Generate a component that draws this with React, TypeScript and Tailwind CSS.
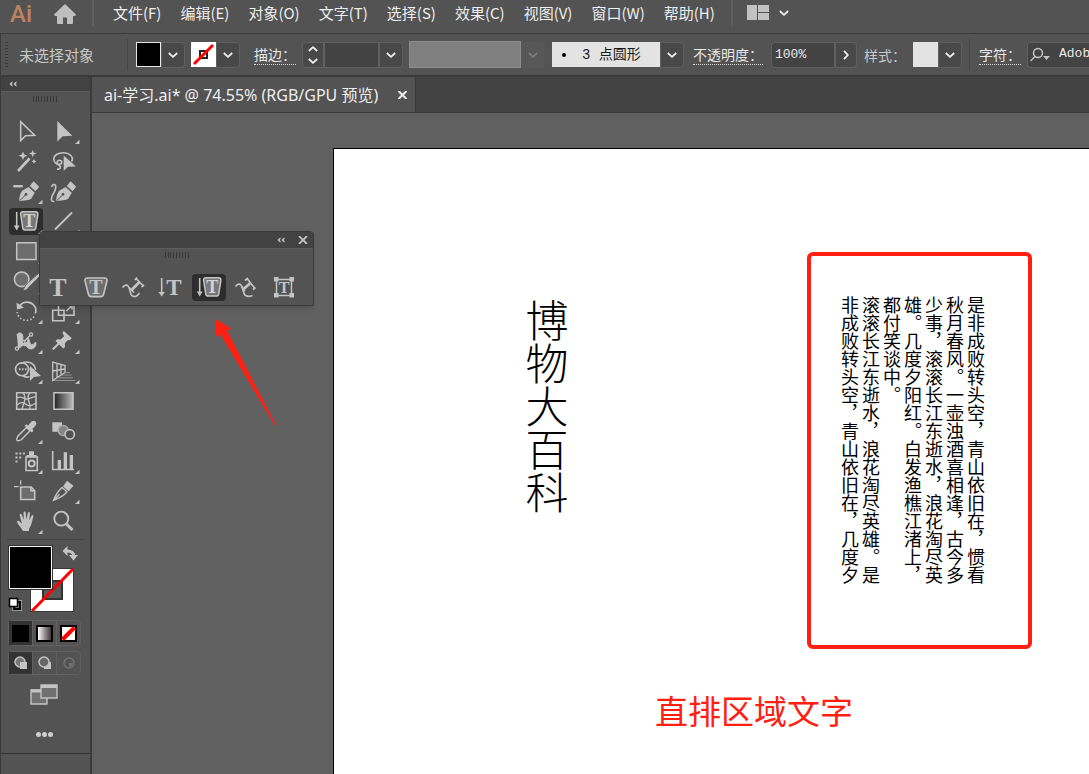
import type { ReactNode } from 'react';

const L = '#c4c4c4';

const menus = ['文件(F)', '编辑(E)', '对象(O)', '文字(T)', '选择(S)', '效果(C)', '视图(V)', '窗口(W)', '帮助(H)'];

const columns = [
  '是非成败转头空，青山依旧在，惯看',
  '秋月春风。一壶浊酒喜相逢，古今多',
  '少事，滚滚长江东逝水，浪花淘尽英',
  '雄。几度夕阳红。白发渔樵江渚上，',
  '都付笑谈中。',
  '滚滚长江东逝水，浪花淘尽英雄。是',
  '非成败转头空，青山依旧在，几度夕',
];

function Chevron({ up = false, dim = false }: { up?: boolean; dim?: boolean }) {
  return (
    <svg width="10" height="6" viewBox="0 0 10 6" fill="none" stroke={dim ? '#7b7b7b' : '#f0f0f0'} strokeWidth="1.8">
      <path d={up ? 'M.8 5 5 1.2 9.2 5' : 'M.8 1 5 4.8 9.2 1'} />
    </svg>
  );
}

function DropButton({ label, dim = false }: { label: string; dim?: boolean }) {
  return (
    <button
      aria-label={label}
      className={
        dim
          ? 'flex h-[26px] w-6 shrink-0 items-center justify-center rounded-r bg-[#575757]'
          : 'flex h-[26px] w-6 shrink-0 items-center justify-center rounded-r border border-[#606060] bg-[#484848]'
      }
    >
      <Chevron dim={dim} />
    </button>
  );
}

function DoubleLeft() {
  return (
    <svg width="8" height="6" viewBox="0 0 8 6" fill="#d0d0d0">
      <path d="M3.500.3v1.700L2.500 3l1 1v1.700L.5 3zM7.500.3v1.700L6.500 3l1 1v1.700L4.500 3z" />
    </svg>
  );
}

function Grip() {
  return (
    <svg width="24" height="6" viewBox="0 0 24 6" stroke="#383838" strokeWidth="1">
      <path d="M.5 0v6M3.5 0v6M5.5 0v6M8.5 0v6M11.5 0v6M14.5 0v6M17.5 0v6M20.5 0v6M23.5 0v6" />
    </svg>
  );
}

function Letter({ x, y, size, fill = L }: { x: number; y: number; size: number; fill?: string }) {
  return (
    <text x={x} y={y} fontSize={size} fontWeight="700" fontFamily="Liberation Serif, serif" textAnchor="middle" fill={fill} stroke="none">
      T
    </text>
  );
}

const nib = (
  <>
    <path fill={L} stroke="none" d="M10 23.2C10.5 19 11 15 13.2 12.8L19.6 9l6.2 5.8-3.4 5.8C20 22.6 15 22.4 10 23.2z" />
    <path fill={L} stroke="none" d="m20.8 8 3.8-4.7 5.6 5.4-3.7 4.5z" />
    <path d="m10.5 22.8 6-5.8" stroke="#535353" strokeWidth="1" />
    <circle cx="17" cy="16.4" r="1.4" fill="#535353" stroke="none" />
  </>
);

const areaVertical = (
  <>
    <path d="M7.7 4v15" strokeWidth="1.6" />
    <path d="M4.8 17.500h5.800L7.700 22.500z" fill={L} stroke="none" />
    <path d="M14 3.800h12.500c2 0 2.600 1 2.300 2.800l-2 13.200c-.3 1.700-1 2.200-2.400 2.200h-8.300c-1.400 0-2.100-.5-2.400-2.200l-2-13.200C11.400 4.800 12 3.800 14 3.800z" fill="#777" strokeWidth="1.500" />
    <Letter x={20.3} y={19} size={18} fill="#d4d4d4" />
  </>
);

type Tool = { name: string; mark?: boolean; art: ReactNode };

const tools: Tool[] = [
  { name: '选择工具', art: <path d="M11.7 3.7v18.8l4.9-4.8 9-.5z" /> },
  { name: '直接选择工具', mark: true, art: <path d="M11.3 3v20.4l5.4-5.2 9.6-.5z" fill={L} stroke="none" /> },
  {
    name: '魔棒工具',
    art: (
      <>
        <path d="M9 23 20.5 10.5" strokeWidth="2.6" />
        <path fill={L} stroke="none" d="m14 3.600 1.300 2.900 3.100 1.300-3.100 1.300-1.300 2.900-1.300-2.900-3.100-1.300 3.100-1.300zM23.700 1.800l1 2.800 2.800 1-2.800 1-1 2.800-1-2.800-2.800-1 2.800-1zM25 11l.8 1.600 1.600.8-1.600.8-.8 1.600-.8-1.600-1.600-.8 1.600-.8z" />
      </>
    ),
  },
  {
    name: '套索工具',
    art: (
      <>
        <path d="M25.5 13.5c2.8-4.5-2-8.700-8.200-8.700-5.500 0-9.500 2.600-9.500 6 0 3 2.200 5.300 5 5.500 1.800 0 3-.8 3-2s-1.100-2-2.400-2c-1.400 0-2.500 1-2.300 2.600.2 2.400 3.300 2.300 3.400 4.200 0 1.900-2.200 2.400-3.500 1.800" />
        <path d="M17.7 7.5V23l4.2-4.200 8-.4z" fill={L} stroke="none" />
      </>
    ),
  },
  { name: '删除锚点工具', mark: true, art: (<><path d="M4.3 8.2h9.4" strokeWidth="2.4" />{nib}</>) },
  { name: '曲率工具', art: (<>{nib}<path d="M8.3 23.5C3 24 6.300 17 8 14.500 10 11 10.500 7 8.400 6.500 7 6.200 6 7.500 5.800 9" /></>) },
  { name: '直排区域文字工具', mark: true, art: areaVertical },
  { name: '直线段工具', mark: true, art: <path d="M9 21.500 26 4.500" strokeWidth="1.8" /> },
  { name: '矩形工具', mark: true, art: <path d="M7.700 4.800H27v16.800H7.700z" fill="#6d6d6d" strokeWidth="1.500" /> },
  { name: '光晕工具', art: null },
  {
    name: '斑点画笔工具',
    mark: true,
    art: (
      <>
        <circle cx="12.700" cy="11.300" r="7.300" fill="#6d6d6d" />
        <path d="M31 4 17.500 16l-3.700 6.200c2.700.5 5-.8 6.200-3.200L32 7z" fill={L} stroke="#535353" strokeWidth=".8" />
      </>
    ),
  },
  { name: '橡皮擦工具', art: null },
  {
    name: '旋转工具',
    mark: true,
    art: (
      <>
        <path d="M10.500 8.300C14 3 21 3 24.500 7c2.400 2.500 2.800 6 1.800 8.500" strokeWidth="1.700" />
        <path d="m7.500 4.500.5 7 7-1.800z" fill={L} stroke="none" />
        <path d="M25 18.500c-3.500 5.500-12 5-15.500-.5-1-1.500-1.300-3-1.200-5" strokeDasharray="1.500 2" />
      </>
    ),
  },
  { name: '比例缩放工具', mark: true, art: (<><path d="M6.700 12.200H18v10.500H6.700zM12.500 3H28v14.300H12.500zM20.500 13l5-5M22 7.500h4v4" /></>) },
  {
    name: '宽度工具',
    mark: true,
    art: (
      <>
        <path d="M8 7.500c0-2.500 3.500-3.500 5-1.500 2 2.800-.5 6 2.500 8.500 2.500 1.500 4-1.500 3-5 2.500 2 1.500 6.500 4 7 2 .5 3-1 4-2.500 1.500 3-1 7-4.500 7-4 0-4-4-7-4-2.500 0-3 3-6 3" fill={L} strokeWidth="1" />
        <path d="M8.500 20 21.500 7M10 10.500 16 18" strokeWidth="1.300" />
        <circle cx="22" cy="6.500" r="1.600" fill="#535353" strokeWidth="1.300" />
        <circle cx="8" cy="20.500" r="1.600" fill="#535353" strokeWidth="1.300" />
        <circle cx="14.500" cy="14" r="1.400" fill="#535353" strokeWidth="1.300" />
      </>
    ),
  },
  { name: '操控变形工具', mark: true, art: (<><path d="m6.700 21.500 7-7" strokeWidth="2" /><path d="m17.800 3 8 7.300-2 1.900-2-.3-3 3.600.3 3.500-1.800 1.500L9.500 13l1.700-1.800 3.400.3 3.500-3.200-1.600-3.500z" fill={L} stroke="none" /></>) },
  {
    name: '形状生成器工具',
    mark: true,
    art: (
      <>
        <circle cx="13" cy="11.300" r="6.500" />
        <path d="M12 5.500C18 2 26 5 26.500 12M13.500 17.500c2 1.500 5 2 7 1" />
        <path d="M10 11.300h11" strokeDasharray="1.500 1.500" strokeWidth="2" />
        <path d="M21 8v15l4-4 7-1z" fill={L} stroke="none" />
      </>
    ),
  },
  {
    name: '透视网格工具',
    mark: true,
    art: (
      <>
        <path d="M6.700 4v18.500L19 14.500V7.500zM11 5.500v14.300M15 6.500v10.700M6.700 13 19 11" strokeWidth="1.300" />
        <path d="M20 14.500h4M16 17h9.500M12.500 19.800H27M8 22.500h21" stroke="#929292" strokeWidth="1" />
      </>
    ),
  },
  { name: '网格工具', art: (<><path d="M7.700 4.800H27v16.500H7.700z" /><path d="M14 5c4 4 1 10-1 16M21 5c-5 4 1 10 0 16M8 10c5-3 7 2 11 1s5-3 8-2M8 17c5-4 7-2 10 0s6 0 9-2" strokeWidth="1.300" /></>) },
  {
    name: '渐变工具',
    art: (
      <>
        <defs>
          <linearGradient id="fade">
            <stop offset="0" stopColor="#222" />
            <stop offset="1" stopColor="#bbb" />
          </linearGradient>
        </defs>
        <path d="M8 4.800h19v16.500H8z" fill="url(#fade)" />
      </>
    ),
  },
  {
    name: '吸管工具',
    mark: true,
    art: (
      <>
        <path d="m17.500 9.500 3.500 3.300-8.500 8.700c-1.500 1-3.700 1.500-4.500.8s.2-2.800 1-4.300z" strokeWidth="1.500" />
        <path d="m15.500 7.800 1.800-1.500 1.800 1.200 2.500-3C23.500 2.300 26 2.800 26.800 4s.6 3-.8 4.300L23.400 11l1.100 1.800-1.700 1.700z" fill={L} stroke="none" />
      </>
    ),
  },
  { name: '混合工具', art: (<><path d="M6.300 4.300H16v9.500H6.300z" fill={L} stroke="none" /><circle cx="17.300" cy="12.500" r="5" fill="#858585" stroke="#a8a8a8" /><circle cx="23.700" cy="16.300" r="4.700" fill="#535353" /></>) },
  {
    name: '符号喷枪工具',
    mark: true,
    art: (
      <>
        <path d="M17 9h11.300v13.500H17z" />
        <path d="M20 3.200h5V7h2.500v2h-10V7H20z" fill={L} stroke="none" />
        <circle cx="22.700" cy="15.500" r="3" strokeWidth="2" />
        <path d="M6.500 5.500h9.500M6.500 9.500h6M6.500 13.500H9" strokeWidth="2" strokeDasharray="2 1.700" />
      </>
    ),
  },
  { name: '柱形图工具', mark: true, art: (<><path d="M6.700 3v18.500H28" /><path d="M11.700 12H15v9h-3.300zM17.700 4.300H21V21h-3.300zM23.700 7H27v14h-3.300z" fill={L} stroke="none" /></>) },
  { name: '画板工具', art: (<><path d="M11.700 9h10.500l3.500 3.700v8.800h-14z" fill="#6d6d6d" /><path d="M22 9v3.800h4" /><path d="M11.700 2.300v4.500M5 8.700h4.700" strokeWidth="1.200" /></>) },
  { name: '切片工具', mark: true, art: (<><path d="M7.500 22.300c2-5.500 4.500-9 8.500-12.800l5 4.300c-3.500 4.200-8 6.700-13.500 8.500zM8 22l5.500-5.700" strokeWidth="1.400" /><path d="m17 8.500 4-5.800 6.500 5-4.800 5.500z" fill={L} stroke="none" /></>) },
  {
    name: '抓手工具',
    mark: true,
    art: (
      <path
        fill={L}
        stroke="none"
        d="M14 23c-1-2.500-4.700-6-6-8.700-.4-1.200 1-2 2-1.200l3 2.700-2.300-8.600c-.3-1.500 1.500-2 2-.6l2 5.400-.2-7.300c0-1.600 2-1.600 2.200 0l.7 6.800 1.500-6.500c.4-1.500 2.200-1.100 2 .4l-.7 7 2.300-4.700c.7-1.300 2.200-.6 1.800.8-1.200 4.500-1.800 9-4.300 12.500V23z"
      />
    ),
  },
  { name: '缩放工具', art: (<><circle cx="15.300" cy="10.700" r="7" strokeWidth="1.800" /><path d="m20.300 16 6.200 6" strokeWidth="3" /></>) },
];

const typeTools: Tool[] = [
  { name: '文字工具', art: <Letter x={17} y={21.5} size={26} /> },
  {
    name: '区域文字工具',
    art: (
      <>
        <path d="M8.500 4h17c2.300 0 2.900 1.200 2.400 3.200L24.600 20c-.4 1.800-1.300 2.600-3 2.600h-9.200c-1.700 0-2.600-.8-3-2.600L6.100 7.200C5.600 5.200 6.200 4 8.500 4z" fill="#6d6d6d" />
        <Letter x={17} y={19.5} size={20} />
      </>
    ),
  },
  {
    name: '路径文字工具',
    art: (
      <>
        <path d="M6.500 13.500c2-2.500 4-3 5.500-1.500 2.500 2.500 1.500 8.500 4.500 10 3.500 1.500 5-.5 7-3" strokeWidth="1.600" />
        <path d="m15.500 16 8-8" strokeWidth="2.800" />
        <path d="m13 13.500 5 5M19.500 4l8 8M19 6l2-2.500M25.500 13l2.500-2" strokeWidth="1.700" />
      </>
    ),
  },
  { name: '直排文字工具', art: (<><path d="M7.700 4v15" /><path d="M4.400 18H11l-3.300 4.500z" fill={L} stroke="none" /><Letter x={20} y={21} size={23} /></>) },
  { name: '直排区域文字', art: areaVertical },
  {
    name: '直排路径文字工具',
    art: (
      <>
        <path d="M6.500 12.500c2-2.500 4-3 5.500-1.500 2.500 2.500 1.500 8.500 4.500 10.500 3 1.800 4.500 1 7 0" strokeWidth="1.600" />
        <path d="m14.500 15 6.500-5.500" strokeWidth="2.800" />
        <path d="m12.500 13 3.500 4M18 4.500l7.500 9.500M16 6.500l3-2.500M24 15.500l2.500-2" strokeWidth="1.700" />
      </>
    ),
  },
  {
    name: '修饰文字工具',
    art: (
      <>
        <path d="M9.500 5.500h15v16h-15z" strokeWidth="1.500" />
        <path d="M7 3h4.500v4.500H7zM22.500 3H27v4.500h-4.500zM7 19h4.500v4.500H7zM22.500 19H27v4.500h-4.500z" fill={L} stroke="none" />
        <Letter x={17} y={19} size={16} />
      </>
    ),
  },
];

function ToolButton({ tool, active, mark }: { tool: Tool; active: boolean; mark: boolean }) {
  return (
    <button aria-label={tool.name} className={active ? 'h-[27px] w-[34px] rounded-sm bg-[#2d2d2d]' : 'h-[27px] w-[34px]'}>
      <svg width="34" height="27" viewBox="0 0 34 27" fill="none" stroke={L} strokeWidth="1.600">
        {tool.art}
        {mark && <path d="M33.500 21.800V26H29z" fill={L} stroke="none" />}
      </svg>
    </button>
  );
}

function MenuBar() {
  return (
    <header className="flex h-[34px] shrink-0 items-start border-b border-[#3a3a3a]">
      <span className="ml-2.5 w-9 font-[Roboto,sans-serif] text-2xl leading-7 font-medium text-[#bd8361]">Ai</span>
      <button aria-label="主页" className="ml-2 pt-1">
        <svg width="22" height="20" viewBox="0 0 22 20" fill="#bebebe">
          <path d="M11 0 0 10.500 1 12h2v6.500c0 1 .4 1.500 1.300 1.500H9v-6.500h4V20h4.700c.9 0 1.300-.5 1.300-1.500V12h2l1-1.500z" />
        </svg>
      </button>
      <div className="ml-4 h-[26px] w-0.5 bg-[#606060]" />
      <nav className="ml-[19px] flex gap-[19px] text-[15px] leading-[26px] whitespace-nowrap text-[#eeeeee]">
        {menus.map((m) => (
          <button key={m}>{m}</button>
        ))}
      </nav>
      <div className="ml-4 h-[26px] w-0.5 bg-[#606060]" />
      <button aria-label="排列文档" className="ml-[14px] flex items-center gap-2.5 pt-[5px]">
        <svg width="22" height="15" viewBox="0 0 22 15" fill="#c2c2c2">
          <path d="M0 0h10v15H0zM11 0h11v7H11zM11 8h11v7H11z" />
        </svg>
        <Chevron />
      </button>
    </header>
  );
}

const box = 'h-[26px] border border-[#606060] bg-[#434343]';

function ControlBar() {
  return (
    <section className="flex h-[43px] shrink-0 items-center overflow-hidden border-b-2 border-l border-[#3a3a3a] text-sm whitespace-nowrap text-[#e8e8e8]">
      <svg className="ml-1 shrink-0" width="3" height="26" viewBox="0 0 3 26" stroke="#3a3a3a" fill="none">
        <path d="M1.500 0v26" strokeWidth="3" strokeDasharray="1 2" />
      </svg>
      <span className="ml-[11px] w-[75px] shrink-0 text-[15px] text-[#c8c8c8]">未选择对象</span>
      <div className="ml-[33px] h-8 w-px shrink-0 bg-[#464646]" />
      <button aria-label="填色" className="ml-2 size-[25px] shrink-0 border border-[#e8e8e8] bg-black" />
      <DropButton label="填色选项" />
      <button aria-label="描边颜色" className="ml-1.5 size-[25px] shrink-0 bg-white">
        <svg width="25" height="25" viewBox="0 0 25 25" fill="none">
          <path d="M9 9h7v7H9z" stroke="#222" strokeWidth="2" />
          <path d="M3 22 22 3" stroke="#f00" strokeWidth="3" />
        </svg>
      </button>
      <DropButton label="描边颜色选项" />
      <label htmlFor="stroke" className="ml-[14px] shrink-0 border-b border-dotted border-[#d8d8d8] leading-5">描边：</label>
      <div className="ml-1.5 flex h-[26px] w-[22px] shrink-0 flex-col items-center justify-center gap-1.5 rounded-l border border-[#606060] bg-[#484848]">
        <button aria-label="增大描边"><Chevron up /></button>
        <button aria-label="减小描边"><Chevron /></button>
      </div>
      <input id="stroke" className={`${box} w-[55px] shrink-0`} />
      <DropButton label="描边粗细选项" />
      <button aria-label="变量宽度" className="ml-1.5 h-[27px] w-28 shrink-0 border border-[#8d8d8d] bg-[#808080]" />
      <DropButton label="变量宽度选项" dim />
      <button className="ml-[7px] flex h-[25px] w-[108px] shrink-0 items-center bg-[#e3e3e3] pl-2.5 text-[#1a1a1a]">
        <span className="size-1 rounded-full bg-black" />
        <span className="ml-4 font-['Liberation_Mono','Noto_Sans_CJK_SC',monospace]">3 点圆形</span>
      </button>
      <DropButton label="画笔选项" />
      <label htmlFor="opacity" className="ml-[9px] shrink-0 border-b border-dotted border-[#d8d8d8] leading-5">不透明度：</label>
      <input id="opacity" defaultValue="100%" className={`${box} ml-2 w-16 shrink-0 rounded-l pl-[3px] font-['Liberation_Mono',monospace] text-[13px]`} />
      <button aria-label="不透明度选项" className="flex h-[26px] w-[22px] shrink-0 items-center justify-center rounded-r border border-[#606060] bg-[#484848]">
        <span className="-rotate-90"><Chevron /></span>
      </button>
      <span className="ml-[7px] shrink-0 text-[#c8c8c8]">样式：</span>
      <button aria-label="图形样式" className="ml-[7px] size-[25px] shrink-0 bg-[#e3e3e3]" />
      <DropButton label="图形样式选项" />
      <div className="ml-[7px] h-8 w-px shrink-0 bg-[#464646]" />
      <label htmlFor="font" className="ml-[9px] shrink-0 border-b border-dotted border-[#d8d8d8] leading-5">字符：</label>
      <div className="ml-1.5 flex h-[26px] min-w-[60px] flex-1 items-center rounded-l border border-r-0 border-[#606060] bg-[#434343]">
        <svg className="ml-0.5 shrink-0" width="21" height="15" viewBox="0 0 21 15" fill="none" stroke="#c4c4c4" strokeWidth="1.500">
          <circle cx="8" cy="6" r="4.500" />
          <path d="M5 9.500.5 14" />
          <path d="M13 9h7l-3.500 4z" fill="#c4c4c4" stroke="none" />
        </svg>
        <input id="font" defaultValue="Adob" className="ml-2 w-0 min-w-0 flex-1 font-['Liberation_Mono',monospace] text-[13px]" />
      </div>
    </section>
  );
}

function Swatches() {
  return (
    <svg className="ml-[7px]" width="72" height="70" viewBox="8 544 72 70" fill="none" role="img" aria-label="填色与描边">
      <path d="M30.500 568.500h43v43h-43z" fill="#fff" stroke="#383838" />
      <path d="M43 581h19v18H43z" fill="#5a5a5a" stroke="#333" strokeWidth="2" />
      <path d="M32 611 73 569" stroke="#f00" strokeWidth="3" />
      <path d="M8.500 545.500h44v44h-44z" fill="#000" stroke="#333" />
      <path d="M9.500 546.500h42v42h-42z" fill="#000" stroke="#f5f5f5" />
      <path d="M66 551c5-.5 8 2 8 5" stroke={L} strokeWidth="3" />
      <path d="m62.500 551 5-5v10zM69 555h9l-4.500 5.500z" fill={L} />
      <path d="M14 602h6v7h-6z" fill="#000" stroke={L} strokeWidth="4" />
      <path d="M14 602h6v7h-6z" fill="none" stroke="#000" strokeWidth="2.500" />
      <path d="M9.500 598.500h8v8h-8z" fill="#fff" stroke="#000" strokeWidth="1.500" />
    </svg>
  );
}

function ModeRows() {
  return (
    <div className="ml-[7px] flex w-[73px] flex-col gap-[5px]">
      <div className="flex h-[26px] rounded border border-[#606060]">
        <button aria-label="颜色" className="flex flex-1 items-center justify-center bg-[#333]"><span className="size-[17px] bg-black" /></button>
        <button aria-label="渐变" className="flex flex-1 items-center justify-center border-x border-[#606060]"><span className="size-[17px] border-2 border-black bg-linear-to-r from-white to-[#403838]" /></button>
        <button aria-label="无" className="flex flex-1 items-center justify-center">
          <svg width="17" height="17" viewBox="0 0 17 17"><path d="M1 1h15v15H1z" fill="#fff" stroke="#000" strokeWidth="2" /><path d="M2.500 14.500 14.500 2.500" stroke="#f00" strokeWidth="4" /></svg>
        </button>
      </div>
      <div className="flex h-6 rounded border border-[#606060]">
        <button aria-label="正常绘图" className="flex flex-1 items-center justify-center bg-[#333]">
          <svg width="14" height="14" viewBox="0 0 14 14"><circle cx="6" cy="6" r="5" fill="#777" stroke={L} strokeWidth="1.500" /><path d="M6 6h7v7H6z" fill={L} /></svg>
        </button>
        <button aria-label="背面绘图" className="flex flex-1 items-center justify-center border-x border-[#606060]">
          <svg width="14" height="14" viewBox="0 0 14 14"><path d="M6 6h7v7H6z" fill={L} /><circle cx="6" cy="6" r="5" fill="#666" stroke={L} strokeWidth="1.500" /></svg>
        </button>
        <button aria-label="内部绘图" className="flex flex-1 items-center justify-center">
          <svg width="12" height="12" viewBox="0 0 12 12"><circle cx="6" cy="6" r="5" fill="none" stroke="#717171" strokeWidth="1.500" /><path d="M6 6h4l-1 3-3 1z" fill="#717171" /></svg>
        </button>
      </div>
    </div>
  );
}

function Toolbox() {
  return (
    <aside className="flex w-[92px] shrink-0 flex-col border-r-2 border-l border-[#3a3a3a]">
      <div className="flex h-[14px] shrink-0 items-center bg-[#424242] pl-2"><DoubleLeft /></div>
      <div className="flex h-[27px] shrink-0 items-start border-t border-[#5c5c5c] pt-1 pl-8"><Grip /></div>
      <div className="ml-2 grid w-[71px] shrink-0 grid-cols-2 gap-x-[3px] gap-y-[3px]">
        {tools.map((t) => (
          <ToolButton key={t.name} tool={t} active={t.name === '直排区域文字工具'} mark={!!t.mark} />
        ))}
      </div>
      <div className="mx-1.5 mt-1 mb-1 h-px shrink-0 bg-[#464646]" />
      <Swatches />
      <div className="h-1.5" />
      <ModeRows />
      <button aria-label="更改屏幕模式" className="mt-[9px] ml-[29px] w-7">
        <svg width="28" height="22" viewBox="0 0 28 22" fill="#707070" stroke={L} strokeWidth="1.400">
          <path d="M1 6h16v14H1z" /><path d="M1 7h16" strokeWidth="3" />
          <path d="M11 1h16v13H11z" /><path d="M11 2.500h16" strokeWidth="3" />
        </svg>
      </button>
      <button aria-label="编辑工具栏" className="mt-[26px] ml-[35px] flex gap-px">
        <span className="size-[5px] rounded-full bg-[#cfcfcf]" />
        <span className="size-[5px] rounded-full bg-[#cfcfcf]" />
        <span className="size-[5px] rounded-full bg-[#cfcfcf]" />
      </button>
      <div className="mt-4 h-px shrink-0 bg-[#333]" />
    </aside>
  );
}

function TypePalette() {
  return (
    <div className="absolute top-[231px] left-[39px] w-[275px] rounded-t border border-[#3a3a3a] bg-[#535353] shadow-md">
      <div className="flex h-4 items-center justify-end gap-[13px] rounded-t bg-[#424242] pr-[5px]">
        <DoubleLeft />
        <button aria-label="关闭面板">
          <svg width="10" height="8" viewBox="0 0 10 8" stroke="#c0c0c0" strokeWidth="1.800"><path d="m1 0 8 8M9 0 1 8" /></svg>
        </button>
      </div>
      <div className="flex h-[26px] items-start justify-center border-t border-[#5c5c5c] pt-[3px]"><Grip /></div>
      <div className="mr-3 ml-px flex justify-between pb-1">
        {typeTools.map((t) => (
          <ToolButton key={t.name} tool={t} active={t.name === '直排区域文字'} mark={false} />
        ))}
      </div>
    </div>
  );
}

export default function App() {
  return (
    <div className="relative flex h-screen flex-col overflow-hidden bg-[#535353] font-['Noto_Sans_CJK_SC',sans-serif]">
      <MenuBar />
      <ControlBar />
      <div className="flex min-h-0 flex-1">
        <Toolbox />
        <main className="flex min-w-0 flex-1 flex-col">
          <div className="flex h-9 shrink-0 border-b border-[#3a3a3a] bg-[#424242]">
            <div className="flex w-[324px] items-center border-r border-[#3a3a3a] bg-[#535353] pl-3 text-[#eeeeee]">
              <span className="font-['Noto_Sans','Noto_Sans_CJK_SC',sans-serif] text-base whitespace-nowrap">ai-学习.ai* @ 74.55% (RGB/GPU 预览)</span>
              <button aria-label="关闭文档" className="mr-2 ml-auto">
                <svg width="9" height="8" viewBox="0 0 9 8" stroke="#eee" strokeWidth="2"><path d="M.5 0 8.500 8M8.500 0 .5 8" /></svg>
              </button>
            </div>
          </div>
          <div className="flex min-h-0 flex-1 bg-[#606060] pt-[35px] pl-[241px]">
            <article className="relative flex-1 border-t border-l border-black bg-white text-black">
              <h1 className="absolute top-[150px] left-[191px] text-[43px] leading-[43px] font-light whitespace-nowrap [writing-mode:vertical-rl]">博物大百科</h1>
              <div className="absolute top-[103px] left-[473px] h-[397px] w-[225px] rounded-md border-4 border-[#ff2012]">
                <div className="mt-10 ml-7 text-lg leading-[21px] whitespace-nowrap [writing-mode:vertical-rl]">
                  {columns.map((c) => (
                    <p key={c}>{c}</p>
                  ))}
                </div>
              </div>
              <p className="absolute top-[541px] left-[321px] text-[33px] leading-10 whitespace-nowrap text-[#ff2012]">直排区域文字</p>
            </article>
          </div>
        </main>
      </div>
      <TypePalette />
      <svg className="absolute top-[319px] left-[215px]" width="64" height="108" viewBox="0 0 64 108" fill="#ff2012">
        <path d="M.7 0 16.500 9.500l-4.500 2L61 106l-1 .7L5.500 15.500.7 18z" />
      </svg>
    </div>
  );
}
